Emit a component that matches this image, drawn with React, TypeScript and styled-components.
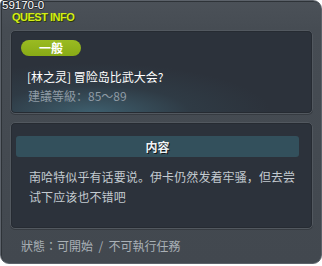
import React from 'react';
import styled, { createGlobalStyle } from 'styled-components';

const GlobalStyle = createGlobalStyle`
  html, body {
    margin: 0;
    padding: 0;
    background: #ffffff;
  }
`;

const CJK = `"Noto Sans CJK SC", "Noto Sans CJK TC", sans-serif`;

const Window = styled.div`
  position: relative;
  width: 322px;
  height: 264px;
  box-sizing: border-box;
  border: 1px solid #5c626a;
  border-radius: 4px 9px 9px 9px;
  background: linear-gradient(180deg, #4b5158 0px, #464c53 28px, #42484f 100%);
  box-shadow: inset 1px 1px 0 #2e3338;
  display: flex;
  flex-direction: column;
  padding: 29px 8px 0 9px;
  gap: 8px;
`;

const WindowId = styled.div`
  position: absolute;
  left: 1px;
  top: -1px;
  color: #ffffff;
  font-family: 'Liberation Sans', sans-serif;
  font-size: 11.5px;
  line-height: 11px;
  text-shadow: 1px 0 0 #23272c, -1px 0 0 #23272c, 0 1px 0 #23272c, 0 -1px 0 #23272c;
`;

const Title = styled.div`
  position: absolute;
  left: 11px;
  top: 11px;
  color: #d3ee14;
  font-family: 'Liberation Sans', sans-serif;
  font-weight: 700;
  font-size: 11px;
  line-height: 11px;
  letter-spacing: -0.5px;
  text-shadow: 1px 1px 0 #2b3a08;
`;

const Section = styled.div<{ $h: number; $glow?: boolean }>`
  height: ${p => p.$h}px;
  box-sizing: border-box;
  border: 1px solid #52585f;
  border-radius: 5px;
  background: ${p =>
    p.$glow
      ? 'radial-gradient(ellipse 180px 50px at 80px 100%, #3e5f6e 0%, #34495560 55%, transparent 100%), #2c323b'
      : '#2c323b'};
  box-shadow: inset 0 0 0 1px #262b32, 0 1px 0 #363b41;
  display: flex;
  flex-direction: column;
`;

const Summary = styled.div`
  padding: 9px 0 0 10px;
  display: flex;
  flex-direction: column;
`;

const Badge = styled.div`
  width: 60px;
  height: 16px;
  border-radius: 8px;
  background: linear-gradient(180deg, #9abb22, #88aa16);
  color: #ffffff;
  font-family: ${CJK};
  font-weight: 700;
  font-size: 12px;
  line-height: 16px;
  text-align: center;
  margin-bottom: 13px;
`;

const QuestName = styled.div`
  color: #ffffff;
  font-family: ${CJK};
  font-size: 12px;
  line-height: 16px;
  padding-left: 6px;
`;

const Level = styled.div`
  color: #8f9ba5;
  font-family: ${CJK};
  font-size: 12px;
  line-height: 16px;
  padding-left: 7px;
  margin-top: 3px;
`;

const Content = styled.div`
  padding: 13px 13px 0 5px;
  display: flex;
  flex-direction: column;
`;

const ContentBar = styled.div`
  height: 21px;
  border-radius: 3px;
  background: #33505c;
  color: #eef2f4;
  font-family: ${CJK};
  font-weight: 700;
  font-size: 12px;
  line-height: 21px;
  text-align: center;
  text-shadow: 1px 1px 0 #101418;
`;

const Body = styled.div`
  padding: 10px 0 0 13px;
  color: #c3cad0;
  font-family: ${CJK};
  font-size: 12px;
  line-height: 20px;
  letter-spacing: 0.1px;
`;

const Status = styled.div`
  padding: 1px 0 0 11px;
  color: #a9b0b6;
  font-family: "Noto Sans CJK TC", "Noto Sans CJK SC", sans-serif;
  font-size: 12px;
  line-height: 16px;
  white-space: pre;
`;

const App = () => {
  return (
    <>
      <GlobalStyle />
      <Window>
        <WindowId>59170-0</WindowId>
        <Title>QUEST INFO</Title>
        <Section $h={84} $glow>
          <Summary>
            <Badge>一般</Badge>
            <QuestName>[林之灵] 冒险岛比武大会?</QuestName>
            <Level>建議等級：85～89</Level>
          </Summary>
        </Section>
        <Section $h={107}>
          <Content>
            <ContentBar>内容</ContentBar>
            <Body>
              南哈特似乎有话要说。伊卡仍然发着牢骚，但去尝
              <br />
              试下应该也不错吧
            </Body>
          </Content>
        </Section>
        <Status>{'狀態：可開始  /  不可執行任務'}</Status>
      </Window>
    </>
  );
};

export default App;
